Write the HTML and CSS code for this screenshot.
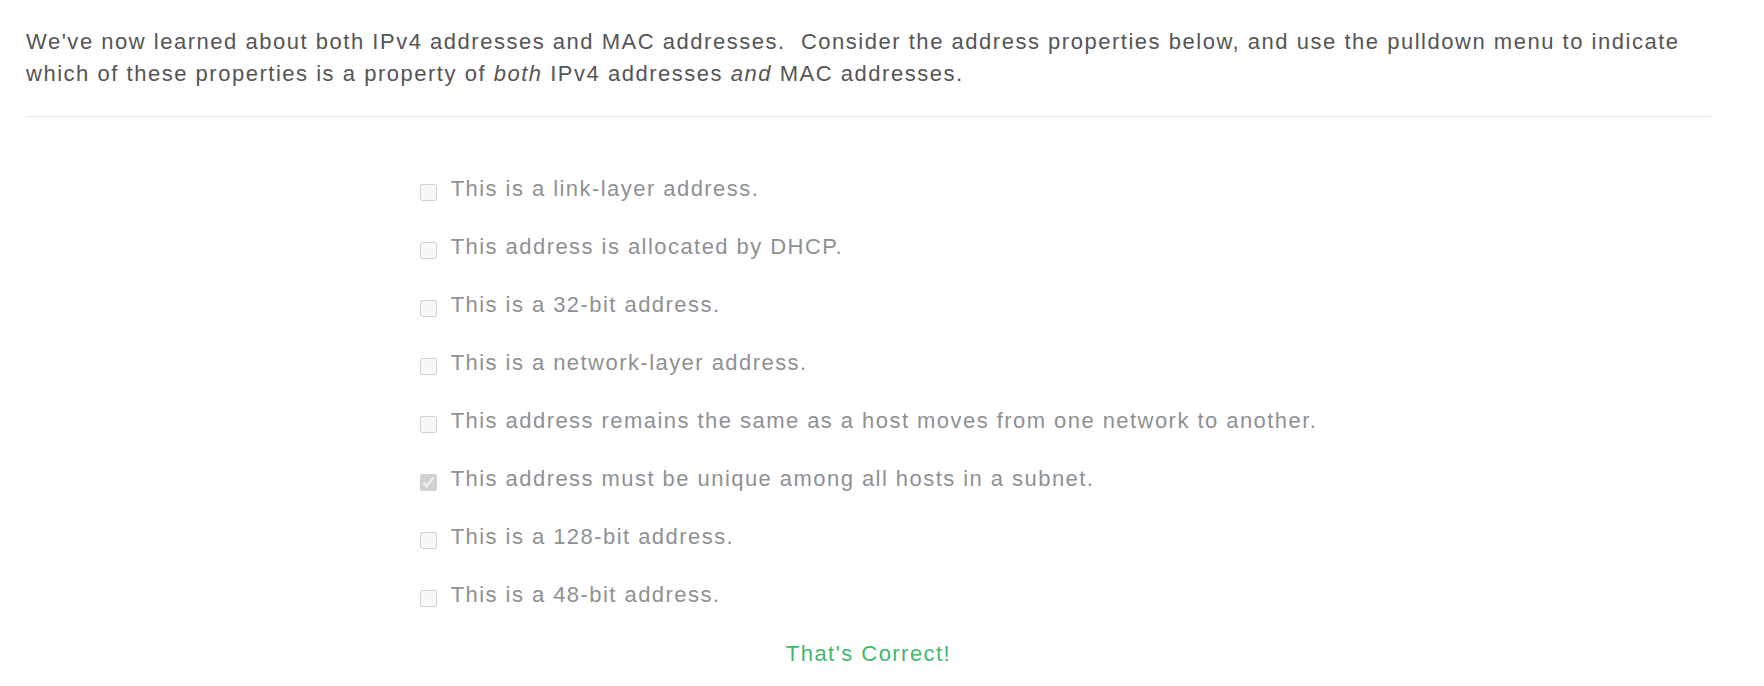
FILE: index.html
```html
<!DOCTYPE html>
<html>
<head>
<meta charset="utf-8">
<link rel="stylesheet" href="styles.css">
</head>
<body>
<div class="page">
  <p class="prompt">We've now learned about both IPv4 addresses and MAC addresses.&nbsp; Consider the address properties below, and use the pulldown menu to indicate which of these properties is a property of <em>both</em> IPv4 addresses <em>and</em> MAC addresses.</p>
  <hr class="rule">
  <div class="choices">
    <ul class="options">
      <li class="option"><input type="checkbox" disabled><span>This is a link-layer address.</span></li>
      <li class="option"><input type="checkbox" disabled><span>This address is allocated by DHCP.</span></li>
      <li class="option"><input type="checkbox" disabled><span>This is a 32-bit address.</span></li>
      <li class="option"><input type="checkbox" disabled><span>This is a network-layer address.</span></li>
      <li class="option"><input type="checkbox" disabled><span>This address remains the same as a host moves from one network to another.</span></li>
      <li class="option"><input type="checkbox" disabled checked><span>This address must be unique among all hosts in a subnet.</span></li>
      <li class="option"><input type="checkbox" disabled><span>This is a 128-bit address.</span></li>
      <li class="option"><input type="checkbox" disabled><span>This is a 48-bit address.</span></li>
    </ul>
  </div>
  <p class="result">That's Correct!</p>
</div>
</body>
</html>
```
FILE: styles.css
```css
html, body {
  margin: 0;
  padding: 0;
  background: #ffffff;
}
.page {
  padding: 26px 53px 0 26px;
  font-family: "Liberation Sans", Arial, sans-serif;
  font-size: 22px;
  letter-spacing: 1.45px;
}
.prompt {
  margin: 0;
  line-height: 32px;
  letter-spacing: 1.52px;
  color: #555555;
}
.rule {
  margin: 26px 0 0 0;
  border: 0;
  border-top: 1px solid #e6e6e6;
  height: 0;
}
.choices {
  text-align: center;
  padding-top: 56px;
}
.options {
  display: inline-flex;
  flex-direction: column;
  gap: 26px;
  margin: 0;
  padding: 0;
  list-style: none;
  text-align: left;
}
.option {
  display: flex;
  align-items: center;
  gap: 14px;
  line-height: 32px;
  color: #8e9194;
}
.option input {
  width: 17px;
  height: 17px;
  margin: 6px 0 0 0;
  flex: none;
}
.result {
  margin: 27px 0 0 0;
  text-align: center;
  line-height: 32px;
  color: #3fba6c;
}
```
